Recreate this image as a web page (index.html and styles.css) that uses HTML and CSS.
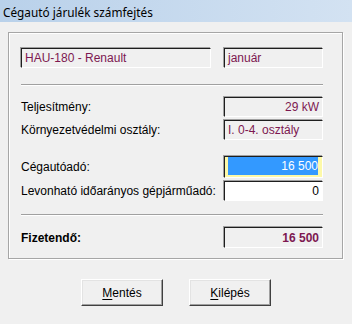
FILE: index.html
```html
<!DOCTYPE html>
<html lang="hu">
<head>
<meta charset="utf-8">
<title>Cégautó járulék számfejtés</title>
<link rel="stylesheet" href="styles.css">
</head>
<body>
<div class="window">
  <div class="titlebar"><span class="title">Cégautó járulék számfejtés</span></div>
  <div class="client">
    <div class="panel">
      <div class="row row-first">
        <div class="field wide">HAU-180 - Renault</div>
        <div class="field val">január</div>
      </div>
      <div class="sep sep-1"></div>
      <div class="row row-a">
        <span class="label">Teljesítmény:</span>
        <div class="field val right">29 kW</div>
      </div>
      <div class="row row-b">
        <span class="label">Környezetvédelmi osztály:</span>
        <div class="field val">I. 0-4. osztály</div>
      </div>
      <div class="row row-c">
        <span class="label">Cégautóadó:</span>
        <div class="field val focused"><span class="selection">16 500</span></div>
      </div>
      <div class="row row-d">
        <span class="label">Levonható időarányos gépjárműadó:</span>
        <div class="field val right edit">0</div>
      </div>
      <div class="sep sep-2"></div>
      <div class="row row-e">
        <span class="label bold">Fizetendő:</span>
        <div class="field val right bold">16 500</div>
      </div>
    </div>
    <div class="buttons">
      <button class="btn"><u>M</u>entés</button>
      <button class="btn"><u>K</u>ilépés</button>
    </div>
  </div>
</div>
</body>
</html>
```
FILE: styles.css
```css
html, body {
  margin: 0;
  padding: 0;
}
body {
  background: #f0f0f0;
  font-family: "Liberation Sans", Arial, sans-serif;
  font-size: 12px;
  color: #000;
}
.window {
  width: 352px;
  height: 324px;
  background: #f0f0f0;
  overflow: hidden;
}
.titlebar {
  height: 22px;
  background: linear-gradient(to right, #b9d1ea, #d3e2f2);
  display: flex;
  align-items: center;
  padding-left: 3px;
}
.title {
  font-family: "Noto Sans", "Open Sans", sans-serif;
  font-size: 11.8px;
  color: #000;
  line-height: 14px;
  padding-top: 1px;
}
.client {
  padding: 10px 9px 0 8px;
}
.panel {
  border: 1px solid #a6a6a6;
  box-shadow: inset 1px 1px 0 #fff, 1px 1px 0 #fff;
  padding: 15px 19px 10px 12px;
  display: flex;
  flex-direction: column;
}
.row {
  display: flex;
  justify-content: space-between;
  align-items: center;
  height: 20px;
}
.row-a { margin-top: 11px; }
.row-b { margin-top: 3px; }
.row-c { margin-top: 17px; }
.row-d { margin-top: 4px; }
.row-e { margin-top: 11px; height: 21px; }
.sep {
  height: 1px;
  border-top: 1px solid #a0a0a0;
  background: #fff;
}
.sep-1 { margin-top: 16px; }
.sep-2 { margin-top: 13px; }
.label {
  white-space: nowrap;
  line-height: 14px;
}
.bold {
  font-weight: bold;
}
.field {
  box-sizing: border-box;
  height: 100%;
  border-style: solid;
  border-width: 1px;
  border-color: #1e1e1e #ffffff #ffffff #1e1e1e;
  box-shadow: -1px -1px 0 #a0a0a0;
  background: #f0f0f0;
  color: #7d1850;
  padding: 0 3px;
  display: flex;
  align-items: center;
  white-space: nowrap;
  line-height: 14px;
}
.wide { width: 190px; }
.val { width: 99px; }
.right { justify-content: flex-end; padding-right: 3px; }
.edit {
  background: #fff;
  color: #000;
}
.focused {
  background: #fdf9a8;
  padding: 0 4px 2px 3px;
  align-items: stretch;
  height: 22px;
}
.selection {
  flex: 1;
  background: #3399ff;
  color: #fff;
  display: flex;
  align-items: center;
  justify-content: flex-end;
}
.buttons {
  display: flex;
  justify-content: center;
  gap: 26px;
  margin-top: 20px;
  padding-left: 1px;
}
.btn {
  box-sizing: border-box;
  width: 82px;
  height: 27px;
  font-family: "Liberation Sans", Arial, sans-serif;
  font-size: 12px;
  color: #000;
  background: #f0f0f0;
  border-style: solid;
  border-width: 1px;
  border-color: #ffffff #404040 #404040 #ffffff;
  box-shadow: inset -1px -1px 0 #a0a0a0, inset 1px 1px 0 #e3e3e3;
  padding: 0;
}
.btn u {
  text-decoration-thickness: 1px;
  text-underline-offset: 2px;
}
```
